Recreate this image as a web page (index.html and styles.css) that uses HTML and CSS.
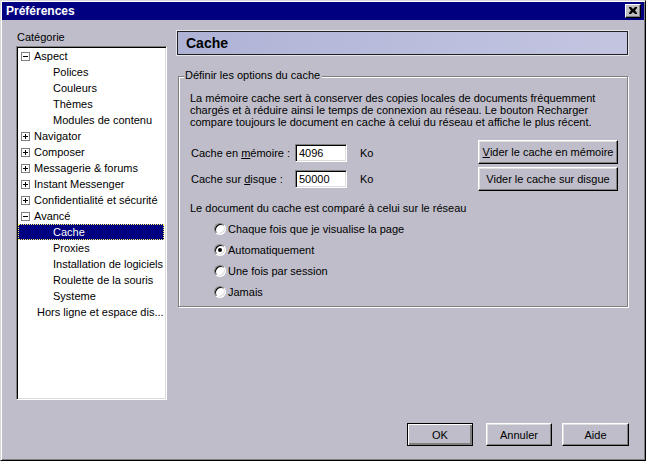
FILE: index.html
```html
<!DOCTYPE html>
<html lang="fr">
<head>
<meta charset="utf-8">
<title>Préférences</title>
<link rel="stylesheet" href="styles.css">
</head>
<body>
<div class="window">
  <div class="titlebar">
    <span class="title">Préférences</span>
    <span class="close"><svg width="8" height="7" viewBox="0 0 8 7"><path d="M0 0h2l2 2 2-2h2v1L6 3.5 8 6v1H6L4 5 2 7H0V6l2-2.5L0 1z" fill="#000"/></svg></span>
  </div>
  <div class="main">
    <div class="sidebar">
      <div class="cat-label">Catégorie</div>
      <div class="tree">
        <div class="row top"><span class="exp"><span class="h"></span></span>Aspect</div>
        <div class="row child">Polices</div>
        <div class="row child">Couleurs</div>
        <div class="row child">Thèmes</div>
        <div class="row child">Modules de contenu</div>
        <div class="row top"><span class="exp"><span class="h"></span><span class="v"></span></span>Navigator</div>
        <div class="row top"><span class="exp"><span class="h"></span><span class="v"></span></span>Composer</div>
        <div class="row top"><span class="exp"><span class="h"></span><span class="v"></span></span>Messagerie &amp; forums</div>
        <div class="row top"><span class="exp"><span class="h"></span><span class="v"></span></span>Instant Messenger</div>
        <div class="row top"><span class="exp"><span class="h"></span><span class="v"></span></span>Confidentialité et sécurité</div>
        <div class="row top"><span class="exp"><span class="h"></span></span>Avancé</div>
        <div class="row child selected">Cache</div>
        <div class="row child">Proxies</div>
        <div class="row child">Installation de logiciels</div>
        <div class="row child">Roulette de la souris</div>
        <div class="row child">Systeme</div>
        <div class="row leaf">Hors ligne et espace dis...</div>
      </div>
    </div>
    <div class="content">
      <div class="header">Cache</div>
      <div class="group">
        <div class="legend">Définir les options du cache</div>
        <p class="desc">La mémoire cache sert à conserver des copies locales de documents fréquemment chargés et à réduire ainsi le temps de connexion au réseau. Le bouton Recharger compare toujours le document en cache à celui du réseau et affiche le plus récent.</p>
        <div class="cache-row">
          <div class="fields">
            <div class="field"><span class="lbl">Cache en <u>m</u>émoire :</span><span class="input">4096</span><span class="unit">Ko</span></div>
            <div class="field"><span class="lbl">Cache sur <u>d</u>isque :</span><span class="input">50000</span><span class="unit">Ko</span></div>
          </div>
          <div class="side-btns">
            <span class="btn wide"><u>V</u>ider le cache en mémoire</span>
            <span class="btn wide">Vider le cache sur disgue</span>
          </div>
        </div>
        <div class="compare">Le document du cache est comparé à celui sur le réseau</div>
        <div class="radios">
          <div class="radio"><span class="dot"></span>Chaque fois que je visualise la page</div>
          <div class="radio"><span class="dot on"></span>Automatiquement</div>
          <div class="radio"><span class="dot"></span>Une fois par session</div>
          <div class="radio"><span class="dot"></span>Jamais</div>
        </div>
      </div>
    </div>
  </div>
  <div class="footer">
    <span class="btn foot default">OK</span>
    <span class="btn foot cancel">Annuler</span>
    <span class="btn foot help">Aide</span>
  </div>
</div>
</body>
</html>
```

FILE: styles.css
```css
* { box-sizing: border-box; }
html, body { margin: 0; padding: 0; }
body {
  width: 646px;
  height: 461px;
  background: #bebdc9;
  font-family: "Liberation Sans", Arial, sans-serif;
  font-size: 11px;
  color: #000;
}
.window {
  width: 646px;
  height: 461px;
  display: flex;
  flex-direction: column;
  background: #bebdc9;
  border-top: 1px solid #d8d8d8;
  border-left: 1px solid #d8d8d8;
  border-right: 1px solid #000;
  border-bottom: 1px solid #000;
  box-shadow: inset 1px 1px #fff, inset -1px -1px #808080;
  padding: 1px;
}
.titlebar {
  height: 18px;
  background: #000080;
  color: #fff;
  display: flex;
  align-items: center;
  justify-content: space-between;
  padding: 0 3px 0 4px;
  flex: none;
}
.title { font-weight: bold; font-size: 12px; }
.close {
  width: 16px;
  height: 14px;
  background: #c0c0c0;
  border-top: 1px solid #fff;
  border-left: 1px solid #fff;
  border-right: 1px solid #000;
  border-bottom: 1px solid #000;
  box-shadow: inset -1px -1px #808080;
  display: flex;
  align-items: center;
  justify-content: center;
  padding-bottom: 1px;
}
.main {
  flex: 1;
  display: flex;
  padding: 11px 0 0 14px;
}
.sidebar { width: 151px; flex: none; }
.cat-label { height: 15px; line-height: 13px; padding-left: 1px; }
.tree {
  height: 354px;
  background: #fff;
  border-top: 1px solid #808080;
  border-left: 1px solid #808080;
  border-right: 1px solid #fff;
  border-bottom: 1px solid #fff;
  box-shadow: inset 1px 1px #000, inset -1px -1px #dcdcdc;
  padding: 1px 2px 0 1px;
}
.row {
  height: 16px;
  line-height: 16px;
  white-space: nowrap;
  display: flex;
  align-items: center;
}
.row.top { padding-left: 3px; }
.row.child { padding-left: 35px; }
.row.leaf { padding-left: 19px; }
.row.selected {
  background: #000080;
  color: #fff;
  outline: 1px dotted #ffff60;
  outline-offset: -1px;
}
.exp {
  width: 9px;
  height: 9px;
  border: 1px solid #808080;
  background: #fff;
  margin-right: 4px;
  display: flex;
  align-items: center;
  justify-content: center;
  position: relative;
}
.exp .h { width: 5px; height: 1px; background: #000; }
.exp .v { width: 1px; height: 5px; background: #000; position: absolute; left: 3px; top: 1px; }
.content {
  width: 451px;
  margin-left: 10px;
  flex: none;
}
.header {
  height: 24px;
  border: 1px solid #202020;
  box-shadow: 0 0 0 1px #e4e4ec;
  background: linear-gradient(90deg, #aeb3d6 0%, #b9bddc 50%, #c3c5e0 100%);
  font-weight: bold;
  font-size: 14px;
  line-height: 22px;
  padding-left: 8px;
}
.group {
  margin-top: 21px;
  width: 450px;
  margin-left: 1px;
  border: 1px solid #808080;
  box-shadow: inset 1px 1px #fff, 1px 1px #fff;
  padding: 0 9px 4px 11px;
}
.legend {
  margin: -8px 0 0 -6px;
  width: fit-content;
  background: #bebdc9;
  padding: 0 2px 0 1px;
  line-height: 13px;
  height: 13px;
}
.desc {
  margin: 10px 0 0 0;
  line-height: 12px;
  width: 420px;
}
.cache-row {
  display: flex;
  justify-content: space-between;
  margin-top: 12px;
}
.fields {
  padding-top: 4px;
  display: flex;
  flex-direction: column;
  gap: 8px;
}
.field { display: flex; align-items: center; height: 18px; }
.lbl { width: 105px; padding-left: 1px; }
.input {
  width: 52px;
  height: 18px;
  background: #fff;
  border-top: 1px solid #808080;
  border-left: 1px solid #808080;
  border-right: 1px solid #fff;
  border-bottom: 1px solid #fff;
  box-shadow: inset 1px 1px #000, inset -1px -1px #dcdcdc;
  padding-left: 3px;
  line-height: 16px;
}
.unit { margin-left: 13px; }
.side-btns { display: flex; flex-direction: column; gap: 3px; }
.btn {
  display: flex;
  align-items: center;
  justify-content: center;
  background: #bebdc9;
  border-top: 1px solid #fff;
  border-left: 1px solid #fff;
  border-right: 1px solid #000;
  border-bottom: 1px solid #000;
  box-shadow: inset -1px -1px #808080, inset 1px 1px #dfdfdf;
  white-space: nowrap;
  font-size: 11px;
}
.btn.wide { width: 140px; height: 24px; }
.compare { margin-top: 11px; line-height: 13px; }
.radios { margin-top: 3px; padding-left: 24px; }
.radio { height: 21px; display: flex; align-items: center; }
.dot {
  width: 12px;
  height: 12px;
  border-radius: 50%;
  background: #fff;
  border: 1px solid;
  border-color: #808080 #fff #fff #808080;
  box-shadow: inset 1px 1px #000, inset -1px -1px #dcdcdc;
  margin-right: 2px;
  display: flex;
  align-items: center;
  justify-content: center;
}
.dot.on::after {
  content: "";
  width: 4px;
  height: 4px;
  border-radius: 50%;
  background: #000;
}
.footer {
  flex: none;
  display: flex;
  justify-content: flex-end;
  padding: 0 15px 13px 0;
}
.btn.foot { width: 66px; height: 23px; }
.btn.default {
  border: 1px solid #000;
  box-shadow: inset 1px 1px #fff, inset -1px -1px #808080, inset -2px -2px #808080;
  margin-right: 13px;
}
.btn.cancel { margin-right: 10px; }
.btn.help { width: 67px; }
```
